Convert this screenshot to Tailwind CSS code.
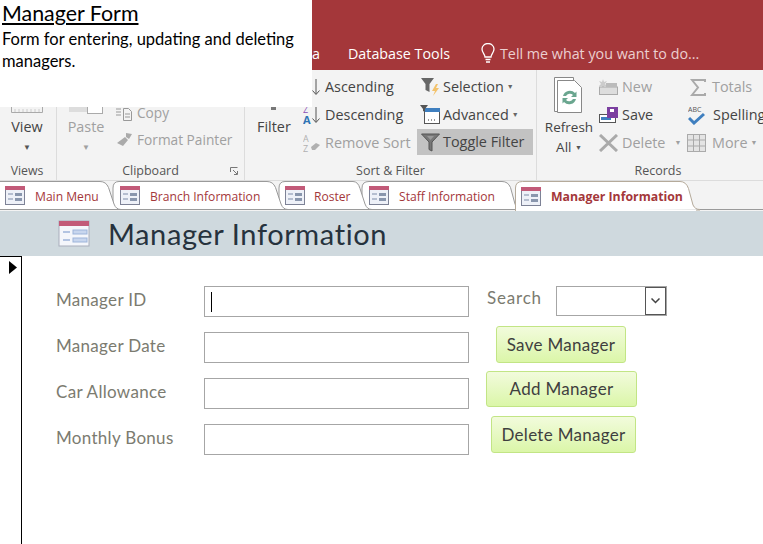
<!DOCTYPE html>
<html lang="en">
<head>
    <meta charset="UTF-8">
    <title>Manager Information</title>
    <script src="https://cdn.jsdelivr.net/npm/@tailwindcss/browser@4"></script>
</head>
<body class="relative w-[763px] h-[544px] overflow-hidden bg-white font-['Open_Sans',sans-serif]">

    <!-- title bar with ribbon tabs -->
    <div class="h-[70px] bg-[#a4373a] flex items-end pb-[6px] text-[14.3px] text-white">
        <span class="ml-[312px] w-[36px]">a</span>
        <span class="w-[132px]">Database Tools</span>
        <svg class="w-[16px] h-[21px]" viewBox="0 0 16 21" fill="none" stroke="#fff" stroke-width="1.3"><path d="M5 14c0-3-3-4-3-8a6 5.500 0 0 1 12 0c0 4-3 5-3 8z"/><path d="M5.500 16.500h5M6 19h4"/></svg>
        <span class="ml-[4px] text-[#eccfd0]">Tell me what you want to do...</span>
    </div>

    <!-- ribbon -->
    <div class="h-[110px] bg-[#f3f3f3] flex text-[14.4px] text-[#444] overflow-hidden">
        <div class="w-[57px] shrink-0 border-r border-[#dcdcdc] flex flex-col items-center">
            <div class="h-[81px] flex flex-col items-center -ml-[2px]">
                <svg class="w-[32px] h-[43px] shrink-0" viewBox="0 0 32 43" fill="none" stroke="#aaa"><path d="M.5 36v6.500h31V36"/><path d="M4 39v3M8 39v3M12 39v3M16 39v3M20 39v3M24 39v3M28 39v3" stroke="#ccc"/></svg>
                <span class="mt-[4px] leading-[20px]">View</span>
                <span class="h-[20px] text-[8px] leading-[20px] text-[#555]">▼</span>
            </div>
            <span class="mt-[11px] -ml-[2px] text-[12.3px] text-[#555]">Views</span>
        </div>

        <div class="w-[188px] shrink-0 border-r border-[#dcdcdc] flex flex-col">
            <div class="h-[81px] flex text-[#a0a0a0]">
                <div class="w-[58px] flex flex-col items-center">
                    <svg class="w-[36px] h-[44px] shrink-0" viewBox="0 0 36 44"><rect x="1" y="36" width="18" height="6" fill="#ddd"/><rect x="19.500" y="36" width="15" height="7.500" fill="#fff" stroke="#aaa"/></svg>
                    <span class="mt-[3px] leading-[20px]">Paste</span>
                    <span class="text-[8px] leading-[20px]">▼</span>
                </div>
                <div class="pt-[33px] flex flex-col gap-[7px] text-[13.7px]">
                    <div class="flex items-center gap-[4px] h-[20px]">
                        <svg class="w-[18px] h-[16px]" viewBox="0 0 18 16" fill="none" stroke="#999"><path d="M1 1h6M1 4h5M1 7h5M1 10h5"/><path d="M8.500 3.500h5l3 3v9h-8z"/><path d="M10 9h5M10 12h5"/></svg>
                        <span>Copy</span>
                    </div>
                    <div class="flex items-center gap-[4px] h-[20px]">
                        <svg class="w-[18px] h-[16px]" viewBox="0 0 18 16" fill="#aaa"><path d="M11 1l6 1-3 5-3-2zM10 5l3 3-5 6-6-3z"/></svg>
                        <span>Format Painter</span>
                    </div>
                </div>
            </div>
            <div class="relative text-center text-[12.5px] text-[#555] mt-[11px]">
                Clipboard
                <svg class="absolute right-[6px] top-[5px] w-[8px] h-[8px]" viewBox="0 0 8 8" fill="none" stroke="#777"><path d="M.5 5V.5H7.500M3 3l4 4M4 7.500h3.500V4"/></svg>
            </div>
        </div>

        <div class="w-[292px] shrink-0 border-r border-[#dcdcdc] flex flex-col">
            <div class="h-[81px] flex">
                <div class="w-[58px] pl-[12px]">
                    <svg class="ml-[14px] w-[5px] h-[40px]" viewBox="0 0 5 40"><rect y="37" width="5" height="3" fill="#777"/></svg>
                    <div class="mt-[7px] leading-[20px]">Filter</div>
                </div>
                <div class="w-[114px] pt-[7px] flex flex-col gap-[8px]">
                    <div class="flex items-center gap-[4px] h-[20px] pl-[8px]">
                        <svg class="w-[10px] h-[18px]" viewBox="0 0 10 18" fill="none" stroke="#555"><path d="M5 1v15M1.500 12.500L5 16.500l3.500-4"/></svg>
                        <span>Ascending</span>
                    </div>
                    <div class="flex items-center gap-[1px] h-[20px]">
                        <svg class="w-[18px] h-[20px]" viewBox="0 0 18 20"><text x="0" y="8" font-size="9" fill="#8a4fb5" font-family="Open Sans">Z</text><text x="0" y="19" font-size="11" font-weight="700" fill="#2f75b5" font-family="Open Sans">A</text><path d="M13 2v15M9.500 13.500L13 17.500l3.500-4" fill="none" stroke="#555"/></svg>
                        <span class="ml-[3px]">Descending</span>
                    </div>
                    <div class="flex items-center h-[20px] text-[#a0a0a0]">
                        <svg class="w-[18px] h-[20px]" viewBox="0 0 18 20" fill="#b0b0b0"><text x="0" y="9" font-size="9" font-family="Open Sans">A</text><text x="0" y="19" font-size="9" font-family="Open Sans">Z</text><path d="M8 14l5-4 4 2-5 5h-3z"/></svg>
                        <span class="ml-[4px]">Remove Sort</span>
                    </div>
                </div>
                <div class="flex flex-col gap-[8px] pt-[7px] w-[116px]">
                    <div class="flex items-center h-[20px] pl-[4px] gap-[3px]">
                        <svg class="w-[20px] h-[20px] -mr-[1px]" viewBox="0 0 20 20"><path d="M0 1h13L8.500 7v8l-4-2V7z" fill="#666"/><path d="M15 7l-4 7h3l-2 5 6-8h-3l2-4z" fill="#f3c26b"/></svg>
                        <span>Selection</span><span class="text-[7px] text-[#666]">▼</span>
                    </div>
                    <div class="flex items-center h-[20px] pl-[3px] gap-[3px]">
                        <svg class="w-[20px] h-[20px]" viewBox="0 0 20 20"><rect x="4.500" y="3.500" width="15" height="15" fill="#fff" stroke="#555"/><rect x="4" y="3" width="16" height="4" fill="#3f7fbf"/><path d="M0 0h8L5 4v3L3 6V4z" fill="#555"/><path d="M8 15h1M11 15h1M14 15h1" stroke="#333"/></svg>
                        <span>Advanced</span><span class="text-[7px] text-[#666]">▼</span>
                    </div>
                    <div class="flex items-center h-[28px] -my-[4px] w-[116px] pl-[4px] gap-[3px] bg-[#c2c2c2]">
                        <svg class="w-[19px] h-[19px]" viewBox="0 0 19 19" fill="none"><path d="M.5 1h18L11 9v9l-3-1.500V9z" fill="#777" stroke="#555"/><path d="M6 3h7L9.500 7z" fill="#999"/></svg>
                        <span>Toggle Filter</span>
                    </div>
                </div>
            </div>
            <div class="text-center text-[12.5px] text-[#555] mt-[11px]">Sort &amp; Filter</div>
        </div>

        <div class="flex-1 flex flex-col min-w-0">
            <div class="h-[81px] flex">
                <div class="w-[58px] shrink-0 flex flex-col items-center pt-[7px] pl-[6px] text-[13.5px]">
                    <svg class="w-[30px] h-[36px] shrink-0" viewBox="0 0 30 36" fill="none"><path d="M.5.500h19v34H.5z" fill="#fff" stroke="#888"/><path d="M3.500 3.500h17l7 7v25h-24z" fill="#fff" stroke="#888"/><path d="M9 19a7 7 0 0 1 12-3l1.500-1.500v5.500H17l2-2a4.500 4.500 0 0 0-7 1z" fill="#6aa68f"/><path d="M22 22a7 7 0 0 1-12 3l-1.500 1.500V21H14l-2 2a4.500 4.500 0 0 0 7-1z" fill="#6aa68f"/></svg>
                    <span class="leading-[20px] mt-[4px]">Refresh</span>
                    <span class="leading-[20px] whitespace-nowrap">All <span class="text-[7px] text-[#555] align-middle">▼</span></span>
                </div>
                <div class="w-[92px] shrink-0 pt-[7px] flex flex-col gap-[8px] pl-[4px]">
                    <div class="flex items-center h-[20px] gap-[4px] text-[#a0a0a0]">
                        <svg class="w-[19px] h-[17px]" viewBox="0 0 19 17"><path d="M4 0l1 3 3-1-2 3 2 2-3 0-1 3-1-3-3 0 2-2-2-3 3 1z" fill="#ccc"/><rect x=".5" y="8" width="18" height="7.500" fill="#ddd" stroke="#aaa"/><rect x="7" y="4" width="11" height="4" fill="#bbb"/></svg>
                        <span>New</span>
                    </div>
                    <div class="flex items-center h-[20px] gap-[4px]">
                        <svg class="w-[19px] h-[17px]" viewBox="0 0 19 17"><rect x=".5" y="7.500" width="16" height="8" fill="#fff" stroke="#555"/><rect x="2" y="10" width="10" height="3" fill="#3f7fbf"/><rect x="8" y="0" width="11" height="11" fill="#7b3fa0"/><rect x="11" y="2" width="4" height="3" fill="#fff"/></svg>
                        <span>Save</span>
                    </div>
                    <div class="flex items-center h-[20px] gap-[4px] text-[#a0a0a0]">
                        <svg class="w-[19px] h-[18px]" viewBox="0 0 19 18" fill="none" stroke="#aaa" stroke-width="3"><path d="M1 1l17 16M18 1L1 17"/></svg>
                        <span>Delete</span><span class="ml-[5px] text-[7px]">▼</span>
                    </div>
                </div>
                <div class="pt-[7px] flex flex-col gap-[8px] whitespace-nowrap">
                    <div class="flex items-center h-[20px] gap-[6px] pl-[3px] text-[#a0a0a0]">
                        <svg class="w-[16px] h-[17px]" viewBox="0 0 16 17" fill="none" stroke="#aaa" stroke-width="2"><path d="M15 3V1H2l6 7.500L2 16h13v-2"/></svg>
                        <span>Totals</span>
                    </div>
                    <div class="flex items-center h-[20px] gap-[7px] pl-[1px]">
                        <svg class="w-[18px] h-[20px]" viewBox="0 0 18 20"><text x="0" y="7" font-size="7" fill="#555" font-family="Open Sans">ABC</text><path d="M1 13l5 5L16 9" fill="none" stroke="#3f7fbf" stroke-width="3"/></svg>
                        <span>Spelling</span>
                    </div>
                    <div class="flex items-center h-[20px] gap-[6px] text-[#a0a0a0]">
                        <svg class="w-[19px] h-[18px]" viewBox="0 0 19 18" fill="none" stroke="#aaa"><rect x=".5" y=".5" width="18" height="17" fill="#e4e4e4"/><path d="M.5 6h18M.5 12h18M6.500 .5v17M12.500 .5v17"/></svg>
                        <span>More</span><span class="-ml-[3px] text-[7px]">▼</span>
                    </div>
                </div>
            </div>
            <div class="w-[226px] text-center text-[12.5px] text-[#555] mt-[11px] ml-[8px]">Records</div>
        </div>
    </div>

    <!-- object tabs -->
    <div class="relative h-[31px] bg-[#f3f3f3] border-t border-[#dcdcdc] flex items-center text-[12.1px] text-[#a4373a]">
        <svg class="absolute left-0 top-[-1px]" width="763" height="31" viewBox="0 0 763 31" fill="#fff" stroke="#9a9a9a">
            <path d="M0 29.500H763" fill="none"/>
            <path d="M362 28V8q0-6.500 7-6.500H502q6 0 8.500 6L515 24q2 5.500 8 5.500H362z"/>
            <path d="M279 29.500V8q0-6.500 6-6.500H353q5 0 7 7L365 24q2 5.500 7 5.500z"/>
            <path d="M113 29.500V8q0-6.500 6-6.500H267q6 0 8.500 6L281 24q2 5.500 7 5.500z"/>
            <path d="M-1 1.500H100q6 0 8.500 6L114 24q2 5.500 7 5.500H-1z"/>
            <path d="M515.500 31V8q0-6.500 7-6.500H680q6 0 8.500 7L693 25q2 4.500 7 4.500 M515.500 31H700" stroke="#b5aa9a"/>
            <path d="M516 29.500h180v2H516z" fill="#fff" stroke="none"/>
        </svg>
        <div class="relative flex items-center pl-[5px] w-[114px] gap-[10px]">
            <svg class="w-[20px] h-[19px]" viewBox="0 0 20 19"><use href="#tabform"/></svg>
            <span class="mt-[2px]">Main Menu</span>
        </div>
        <div class="relative flex items-center pl-[6px] w-[165px] gap-[10px]">
            <svg class="w-[20px] h-[19px]" viewBox="0 0 20 19"><use href="#tabform"/></svg>
            <span class="mt-[2px]">Branch Information</span>
        </div>
        <div class="relative flex items-center pl-[6px] w-[84px] gap-[9px]">
            <svg class="w-[20px] h-[19px]" viewBox="0 0 20 19"><use href="#tabform"/></svg>
            <span class="mt-[2px]">Roster</span>
        </div>
        <div class="relative flex items-center pl-[6px] w-[152px] gap-[10px]">
            <svg class="w-[20px] h-[19px]" viewBox="0 0 20 19"><use href="#tabform"/></svg>
            <span class="mt-[2px]">Staff Information</span>
        </div>
        <div class="relative flex items-center pl-[6px] gap-[10px] font-bold text-[12.3px]">
            <svg class="w-[20px] h-[19px]" viewBox="0 0 20 19"><use href="#tabform"/></svg>
            <span class="mt-[2px]">Manager Information</span>
        </div>
    </div>

    <!-- form header -->
    <div class="h-[45px] bg-[#cfd9de] flex items-center pl-[58px] gap-[17px]">
        <svg class="w-[33px] h-[28px]" viewBox="0 0 33 28">
            <rect x="1" y="1" width="30" height="25" fill="#f4f6fb" stroke="#a9aebb"/>
            <rect x="1" y="1" width="30" height="5" fill="#c25a78"/>
            <path d="M5 12h7M5 20h7" stroke="#9db4da" stroke-width="1.500"/>
            <rect x="15" y="10" width="14" height="4" fill="#c8d6ee" stroke="#9db4da"/>
            <rect x="15" y="18" width="14" height="4" fill="#c8d6ee" stroke="#9db4da"/>
        </svg>
        <span class="text-[29px] tracking-[0.6px] text-[#26323d] font-['Lato',sans-serif]">Manager Information</span>
    </div>

    <!-- form body -->
    <div class="flex h-[288px] font-['Lato',sans-serif] text-[17px]">
        <div class="w-[22px] shrink-0 border-r border-t border-black pl-[9px] pt-[4px]">
            <svg class="w-[8px] h-[13px]" viewBox="0 0 8 13"><path d="M0 0l8 6.500L0 13z" fill="#000"/></svg>
        </div>
        <div class="pt-[30px] pl-[34px] flex flex-col gap-[15px] text-[#7b7b70] tracking-[0.3px]">
            <div class="flex items-center">
                <span class="w-[148px] -mt-[4px]">Manager ID</span>
                <div class="w-[265px] h-[31px] border border-[#a6a6a6] bg-white flex items-center pl-[6px]">
                    <span class="w-px h-[20px] bg-black"></span>
                </div>
            </div>
            <div class="flex items-center">
                <span class="w-[148px] -mt-[4px]">Manager Date</span>
                <div class="w-[265px] h-[31px] border border-[#a6a6a6] bg-white"></div>
            </div>
            <div class="flex items-center">
                <span class="w-[148px] -mt-[4px]">Car Allowance</span>
                <div class="w-[265px] h-[31px] border border-[#a6a6a6] bg-white"></div>
            </div>
            <div class="flex items-center">
                <span class="w-[148px] -mt-[4px]">Monthly Bonus</span>
                <div class="w-[265px] h-[31px] border border-[#a6a6a6] bg-white"></div>
            </div>
        </div>
        <div class="pt-[30px] pl-[18px] flex flex-col text-[#3f3f3f] tracking-[0.3px]">
            <div class="flex items-center h-[30px]">
                <span class="w-[69px] text-[#7b7b70] tracking-[0.8px] -mt-[6px]">Search</span>
                <div class="w-[111px] h-[30px] border border-[#a6a6a6] bg-white flex justify-end">
                    <div class="w-[21px] border border-[#555] flex items-center justify-center">
                        <svg class="w-[9px] h-[6px]" viewBox="0 0 9 6" fill="none" stroke="#444" stroke-width="1.500"><path d="M.5.500L4.500 4.500 8.500.500"/></svg>
                    </div>
                </div>
            </div>
            <button class="ml-[9px] mt-[10px] w-[130px] h-[37px] rounded-[3px] border border-[#c2e585] bg-gradient-to-b from-[#f2fbdc] to-[#dbf6a8]">Save Manager</button>
            <button class="-ml-[1px] mt-[8px] w-[151px] h-[36px] rounded-[3px] border border-[#c2e585] bg-gradient-to-b from-[#f2fbdc] to-[#dbf6a8]">Add Manager</button>
            <button class="ml-[4px] mt-[9px] w-[145px] h-[37px] rounded-[3px] border border-[#c2e585] bg-gradient-to-b from-[#f2fbdc] to-[#dbf6a8]">Delete Manager</button>
        </div>
    </div>

    <!-- white title card over the window -->
    <div class="absolute left-0 top-0 w-[312px] h-[107px] bg-white pl-[2px] text-black font-['Lato',sans-serif]">
        <div class="text-[21.4px] leading-[27px] underline">Manager Form</div>
        <p class="text-[16.5px] leading-[22px] mt-[1px]">Form for entering, updating and deleting managers.</p>
    </div>

    <svg class="hidden">
        <defs>
            <g id="tabform">
                <rect x=".5" y=".5" width="19" height="18" fill="#eef1f8" stroke="#7d8296"/>
                <rect x="0" y="0" width="20" height="4" fill="#c25a78"/>
                <path d="M3 8h5M3 13h5" stroke="#7d8ba8"/>
                <rect x="10" y="7" width="7" height="3" fill="#8996ad"/>
                <rect x="10" y="12" width="7" height="3" fill="#8996ad"/>
            </g>
        </defs>
    </svg>
</body>
</html>
